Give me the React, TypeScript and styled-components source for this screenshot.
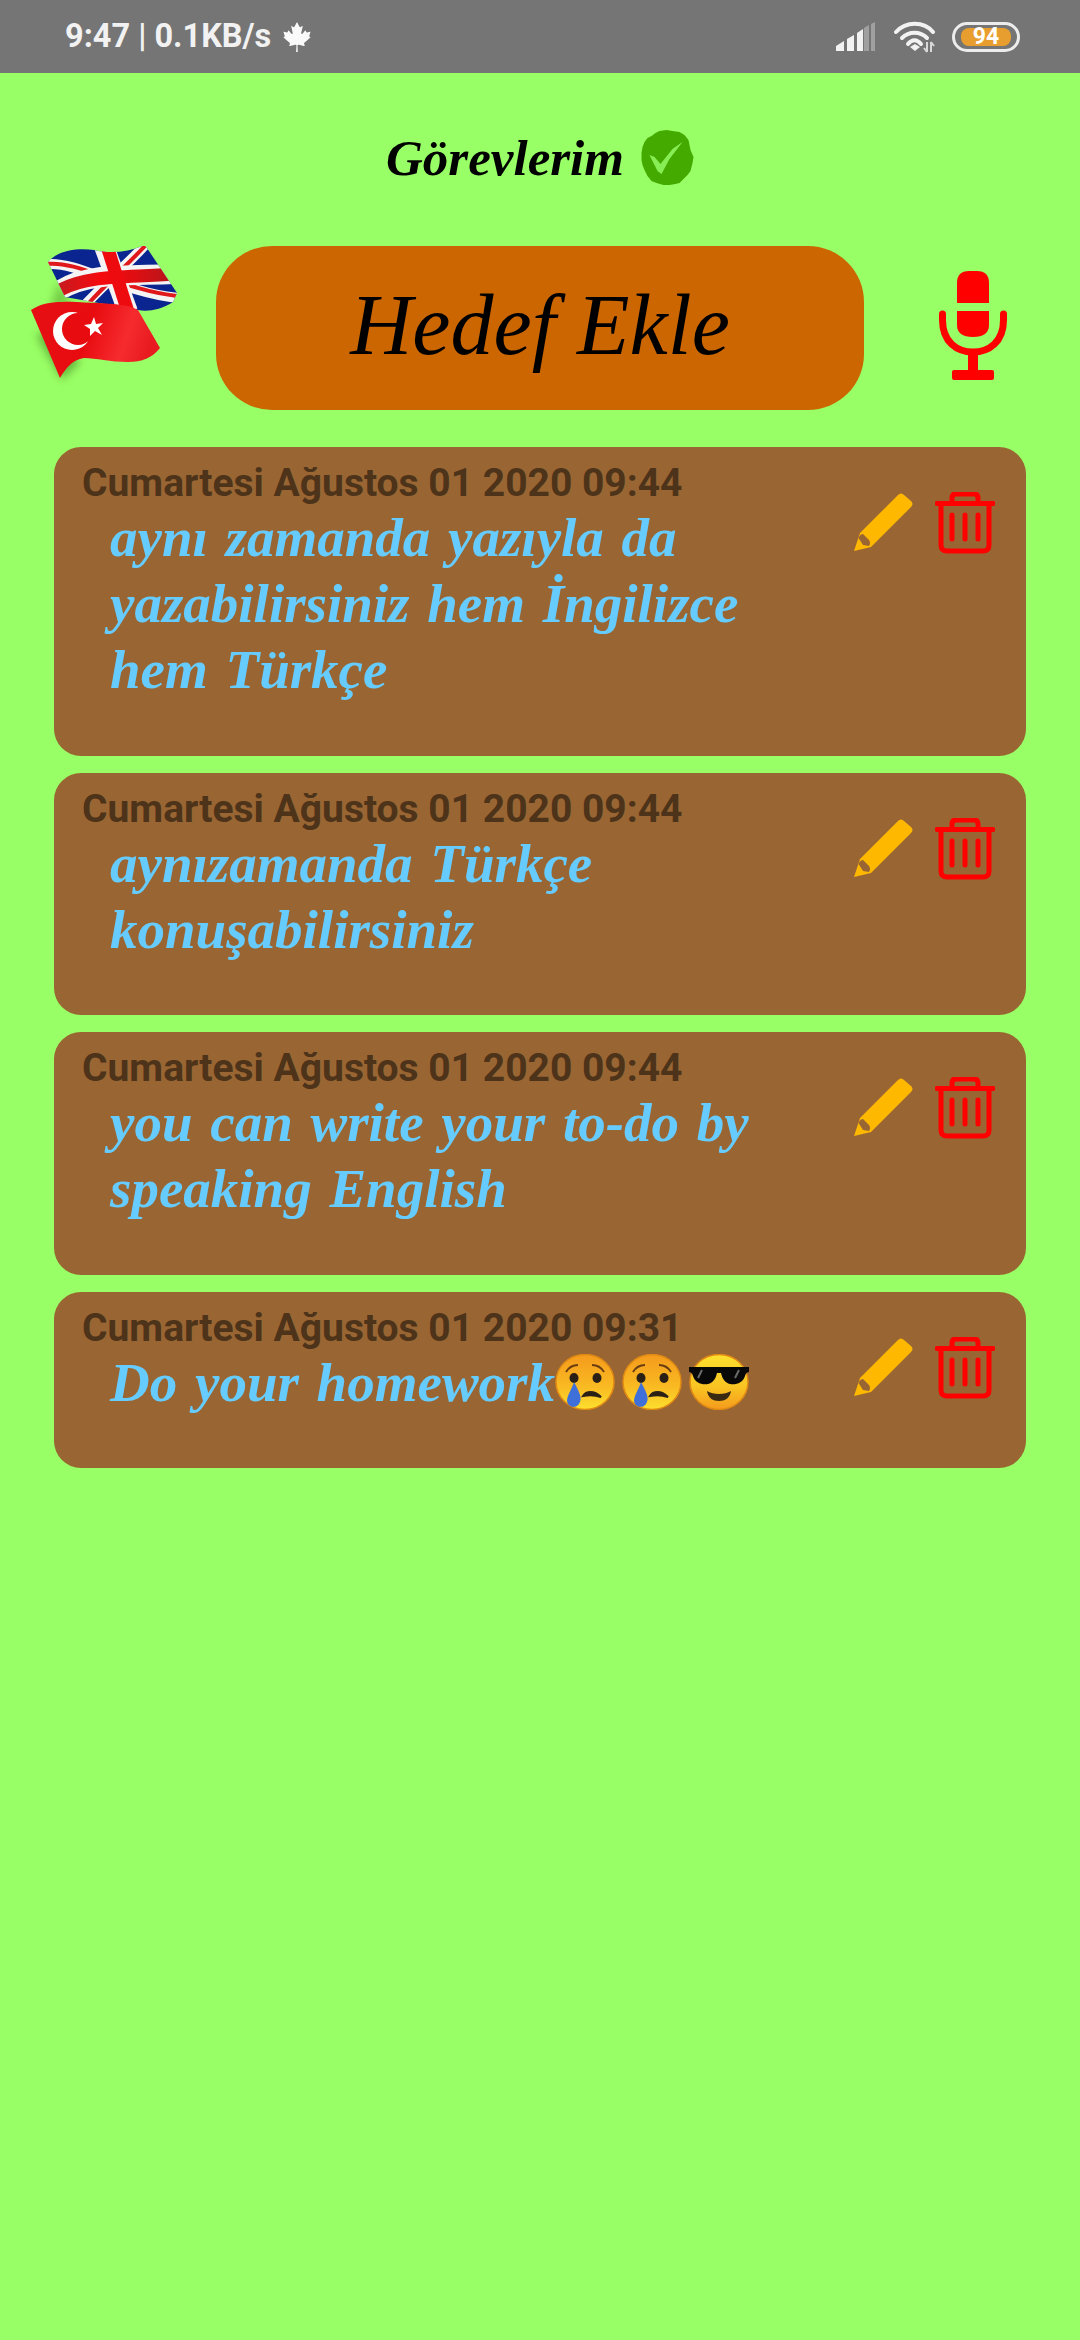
import styled, { createGlobalStyle } from "styled-components";
import { FaCanadianMapleLeaf } from "react-icons/fa";

const GlobalStyle = createGlobalStyle`
  html, body {
    margin: 0;
    padding: 0;
    background: #99ff66;
  }
`;

// Layout styles
const Page = styled.div`
  width: 1080px;
  min-height: 2340px;
  background: #99ff66;
  display: flex;
  flex-direction: column;
  font-family: Roboto, sans-serif;
`;

const StatusBar = styled.div`
  height: 73px;
  background: #757575;
  color: #f2f2f2;
  display: flex;
  align-items: center;
  padding: 0 60px 0 65px;
  flex-shrink: 0;
`;

const StatusText = styled.span`
  font-size: 32.5px;
  font-weight: 700;
  line-height: 1;
  margin-top: -1px;
`;

const Leaf = styled(FaCanadianMapleLeaf)`
  width: 30px;
  height: 30px;
  margin-left: 11px;
  color: #fafafa;
`;

const StatusIcons = styled.div`
  margin-left: auto;
  display: flex;
  align-items: center;
`;

const Battery = styled.div`
  width: 68px;
  height: 30px;
  box-sizing: border-box;
  border: 3px solid #ececec;
  border-radius: 15px;
  margin-left: 16px;
  padding: 3px 6px;
  display: flex;
`;

const BatteryFill = styled.div`
  flex: 1;
  background: #e89e2e;
  border-radius: 8px;
  color: #fff;
  font-size: 23px;
  font-weight: 700;
  line-height: 18px;
  text-align: center;
`;

const TitleRow = styled.div`
  height: 173px;
  display: flex;
  align-items: center;
  justify-content: center;
  gap: 17px;
  padding-bottom: 3px;
  box-sizing: border-box;
`;

const Title = styled.h1`
  margin: 0;
  font-family: "Liberation Serif", serif;
  font-style: italic;
  font-weight: 700;
  font-size: 51px;
  line-height: 1;
  color: #000;
`;

const HeaderRow = styled.div`
  display: flex;
  align-items: flex-start;
  padding-left: 10px;
`;

const AddButton = styled.button`
  width: 648px;
  height: 164px;
  margin-left: 26px;
  border: none;
  border-radius: 56px;
  background: #cc6600;
  color: #000;
  font-family: "Liberation Serif", serif;
  font-style: italic;
  font-size: 86px;
  padding: 0 0 6px;
`;

const MicIcon = styled.svg`
  width: 70px;
  height: 110px;
  margin: 24px 0 0 74px;
`;

const CardList = styled.div`
  display: flex;
  flex-direction: column;
  gap: 17px;
  margin: 37px 54px 0;
`;

const Card = styled.div`
  background: #996633;
  border-radius: 27px;
  display: flex;
  justify-content: space-between;
  padding: 14px 31px 52.6px 28px;
`;

const CardBody = styled.div`
  min-width: 0;
`;

const DateLine = styled.div`
  font-size: 39px;
  font-weight: 700;
  line-height: 44px;
  color: #4d3319;
  white-space: nowrap;
`;

const TodoText = styled.div`
  font-family: "Liberation Serif", serif;
  font-style: italic;
  font-weight: 700;
  font-size: 55px;
  line-height: 66px;
  word-spacing: 4px;
  color: #66ccff;
  padding-left: 28px;
  white-space: pre-line;
`;

const Emojis = styled.span`
  display: inline-flex;
  gap: 7px;
  vertical-align: -9px;
`;

const Actions = styled.div`
  display: flex;
  align-items: flex-start;
  gap: 21px;
  padding-top: 31px;
`;

const ActionIcon = styled.svg`
  width: 60px;
  height: 62px;
  display: block;
`;

function SignalIcon() {
  return (
    <svg width="40" height="30" viewBox="0 0 40 30">
      <path d="M0 29V24L8 19V29Z" fill="#f2f2f2" />
      <path d="M11 29V17L18 13V29Z" fill="#f2f2f2" />
      <path d="M21 29V11L27 7V29Z" fill="#f2f2f2" />
      <path d="M28 29V6L33 3V29Z" fill="#a0a0a0" />
      <path d="M35 29V2L39 0V29Z" fill="#a0a0a0" />
    </svg>
  );
}

function WifiIcon() {
  return (
    <svg width="42" height="32" viewBox="0 0 42 32" style={{ marginLeft: 18 }}>
      <path d="M2 11C12 0 30 0 39 11" fill="none" stroke="#f2f2f2" strokeWidth="4" strokeLinecap="round" />
      <path d="M8 17C15 10 26 10 33 17" fill="none" stroke="#f2f2f2" strokeWidth="4" strokeLinecap="round" />
      <path d="M14 23C18 18 23 18 27 23" fill="none" stroke="#f2f2f2" strokeWidth="4" strokeLinecap="round" />
      <path d="M16 26L21 23L26 26L21 30Z" fill="#f2f2f2" />
      <path d="M33 21V31M33 31L30 27M37 31V21M37 21L40 25" fill="none" stroke="#d8d8d8" strokeWidth="2" />
    </svg>
  );
}

function CheckBadge() {
  return (
    <svg width="53" height="56" viewBox="0 0 52 56">
      <path
        d="M14 3L18 1L25 0L31 1L38 2L43 5L47 10L48 15L49 20L52 27L51 33L49 41L46 45L42 49L38 53L34 54L28 55L22 55L15 53L10 51L6 46L3 40L1 35L0 30L0 23L1 17L3 12L6 8L10 6Z"
        fill="#44aa00"
      />
      <path d="M8 25L13 27L19 34L31 19L41 12L28 29L20 44L16 41Z" fill="#88ee55" />
    </svg>
  );
}

function FlagsIcon() {
  return (
    <svg width="180" height="144" viewBox="0 16 180 144">
      <defs>
        <clipPath id="ukClip">
          <path d="M38 32C48 20 68 18 84 20C100 24 120 22 135 15L167 63L163 72C150 80 138 82 128 80L55 67Z" />
        </clipPath>
        <linearGradient id="trShade" x1="0" y1="0" x2="1" y2="0.2">
          <stop offset="0" stopColor="#e60f14" />
          <stop offset="0.5" stopColor="#e80c10" />
          <stop offset="0.8" stopColor="#f62b2e" />
          <stop offset="1" stopColor="#e81c20" />
        </linearGradient>
        <linearGradient id="ukBand" gradientUnits="userSpaceOnUse" x1="50" y1="50" x2="165" y2="50">
          <stop offset="0" stopColor="#c81a1e" />
          <stop offset="0.35" stopColor="#f50a0e" />
          <stop offset="0.65" stopColor="#e00e12" />
          <stop offset="1" stopColor="#b0181c" />
        </linearGradient>
        <filter id="softShadow" x="-20%" y="-20%" width="140%" height="140%">
          <feGaussianBlur stdDeviation="4" />
        </filter>
      </defs>
      <path d="M48 52L62 74L40 80Z" fill="#5aa82e" opacity="0.6" filter="url(#softShadow)" />
      <path d="M26 105L52 150L70 132L40 100Z" fill="#4f9a2a" opacity="0.7" filter="url(#softShadow)" />
      <g clipPath="url(#ukClip)">
        <rect x="30" y="10" width="140" height="80" fill="#0a2590" />
        <path d="M38 34C70 32 110 62 168 68" fill="none" stroke="#f4f4f4" strokeWidth="10" />
        <path d="M36 34C70 30 110 60 168 66" fill="none" stroke="#e0181c" strokeWidth="4" />
        <path d="M136 14C118 34 96 52 74 76" fill="none" stroke="#f4f4f4" strokeWidth="10" />
        <path d="M135 16C118 34 98 52 78 74" fill="none" stroke="#e0181c" strokeWidth="4" />
        <path d="M50 60C80 42 120 46 164 44" fill="none" stroke="#f4f4f4" strokeWidth="20" />
        <path d="M94 16L118 82" fill="none" stroke="#f4f4f4" strokeWidth="20" />
        <path d="M50 60C80 44 120 48 164 44" fill="none" stroke="url(#ukBand)" strokeWidth="13" />
        <path d="M97 16L118 82" fill="none" stroke="#ee0b10" strokeWidth="13" />
      </g>
      <path
        d="M21 80C30 74 40 72 52 72C66 71 76 73 88 73C102 74 118 74 128 80L150 118C142 128 132 132 118 132C100 132 86 128 74 128C62 130 56 138 50 148Z"
        fill="url(#trShade)"
      />
      <circle cx="62" cy="101" r="19" fill="#fff" />
      <circle cx="68" cy="99" r="16" fill="#e80c10" />
      <path
        d="M84 87L86 94L93 93L88 98L92 105L85 101L80 106L80 99L74 95L81 94Z"
        fill="#fff"
      />
    </svg>
  );
}

function CryingEmoji() {
  return (
    <svg width="60" height="56" viewBox="0 0 60 56">
      <defs>
        <linearGradient id="cryFace" x1="0" y1="0" x2="0" y2="1">
          <stop offset="0" stopColor="#f59a1c" />
          <stop offset="0.6" stopColor="#f9bb22" />
          <stop offset="1" stopColor="#fde02f" />
        </linearGradient>
      </defs>
      <ellipse cx="30" cy="28" rx="29" ry="27.5" fill="url(#cryFace)" stroke="#e08a14" strokeWidth="1.5" />
      <path d="M11 18C14 13 18 11 23 11M37 11C42 11 46 13 49 18" fill="none" stroke="#6b3d12" strokeWidth="2" />
      <ellipse cx="19" cy="24" rx="4.5" ry="5" fill="#2a2016" />
      <ellipse cx="42" cy="24" rx="4.5" ry="5" fill="#2a2016" />
      <path d="M28 42C31 37 39 36 46 43C40 41 34 41 28 42Z" fill="#2a2016" stroke="#2a2016" strokeWidth="2" />
      <path d="M19 28C24 38 28 44 24 50C20 55 13 53 12 47C12 41 17 35 19 28Z" fill="#3f6fd8" />
    </svg>
  );
}

function CoolEmoji() {
  return (
    <svg width="60" height="56" viewBox="0 0 60 56">
      <defs>
        <linearGradient id="coolFace" x1="0" y1="0" x2="0" y2="1">
          <stop offset="0" stopColor="#fde02f" />
          <stop offset="0.6" stopColor="#f9c322" />
          <stop offset="1" stopColor="#f59a1c" />
        </linearGradient>
      </defs>
      <ellipse cx="30" cy="28" rx="29" ry="27.5" fill="url(#coolFace)" stroke="#e08a14" strokeWidth="1.5" />
      <path
        d="M0 13H60V18C58 18 57 19 56 22C54 29 47 31 41 30C36 29 33 24 32 19H28C27 24 24 29 19 30C13 31 6 29 4 22C3 19 2 18 0 18Z"
        fill="#080808"
      />
      <path d="M9 24L13 16M46 24L50 16" stroke="#6a6a6a" strokeWidth="2" />
      <path d="M18 37C24 41 36 41 42 37C41 44 36 47 30 47C24 47 19 44 18 37Z" fill="#3a2a12" />
    </svg>
  );
}

function PencilIcon() {
  return (
    <ActionIcon viewBox="0 0 60 62">
      <path d="M0 59L6 41L44 3Q47 0 50 3L57 9Q60 12 57 15L17 55Z" fill="#ffb800" />
      <path d="M4.5 46Q6 42 9 42L15 48Q17 51 15 54L9 53Z" fill="#996633" />
    </ActionIcon>
  );
}

function TrashIcon() {
  return (
    <ActionIcon viewBox="0 0 60 62">
      <g fill="none" stroke="#ff0000" strokeWidth="5" strokeLinecap="round" strokeLinejoin="round">
        <path d="M2 11.5H58" />
        <path d="M17 11V6Q17 2 21 2H39Q43 2 43 6V11" />
        <path d="M6 12V53Q6 59 12 59H48Q54 59 54 53V12" />
        <path d="M17 23V47M30 23V47M43 23V47" />
      </g>
    </ActionIcon>
  );
}

const todos = [
  {
    date: "Cumartesi Ağustos 01 2020 09:44",
    text: "aynı zamanda yazıyla da\nyazabilirsiniz hem İngilizce\nhem Türkçe",
  },
  {
    date: "Cumartesi Ağustos 01 2020 09:44",
    text: "aynızamanda Türkçe\nkonuşabilirsiniz",
  },
  {
    date: "Cumartesi Ağustos 01 2020 09:44",
    text: "you can write your to-do by\nspeaking English",
  },
  {
    date: "Cumartesi Ağustos 01 2020 09:31",
    text: "Do your homework",
    emojis: true,
  },
];

function App() {
  return (
    <Page>
      <GlobalStyle />
      <StatusBar>
        <StatusText>9:47 | 0.1KB/s</StatusText>
        <Leaf />
        <StatusIcons>
          <SignalIcon />
          <WifiIcon />
          <Battery>
            <BatteryFill>94</BatteryFill>
          </Battery>
        </StatusIcons>
      </StatusBar>

      <TitleRow>
        <Title>Görevlerim</Title>
        <CheckBadge />
      </TitleRow>

      <HeaderRow>
        <FlagsIcon />
        <AddButton>Hedef Ekle</AddButton>
        <MicIcon viewBox="0 0 68 110">
          <path d="M18 33V13Q18 1 30 1H38Q50 1 50 13V33Z" fill="#ff0000" />
          <path d="M18 41H50V55Q50 67 34 67Q18 67 18 55Z" fill="#ff0000" />
          <path
            d="M3.5 44V50C3.5 72 18 82 34 82C50 82 64.5 72 64.5 50V44"
            fill="none"
            stroke="#ff0000"
            strokeWidth="7"
            strokeLinecap="round"
          />
          <rect x="29" y="82" width="10" height="20" fill="#ff0000" />
          <rect x="13" y="100" width="42" height="10" rx="2" fill="#ff0000" />
        </MicIcon>
      </HeaderRow>

      <CardList>
        {todos.map((todo) => (
          <Card key={todo.text}>
            <CardBody>
              <DateLine>{todo.date}</DateLine>
              <TodoText>
                {todo.text}
                {todo.emojis && (
                  <Emojis>
                    <CryingEmoji />
                    <CryingEmoji />
                    <CoolEmoji />
                  </Emojis>
                )}
              </TodoText>
            </CardBody>
            <Actions>
              <PencilIcon />
              <TrashIcon />
            </Actions>
          </Card>
        ))}
      </CardList>
    </Page>
  );
}

export default App;
